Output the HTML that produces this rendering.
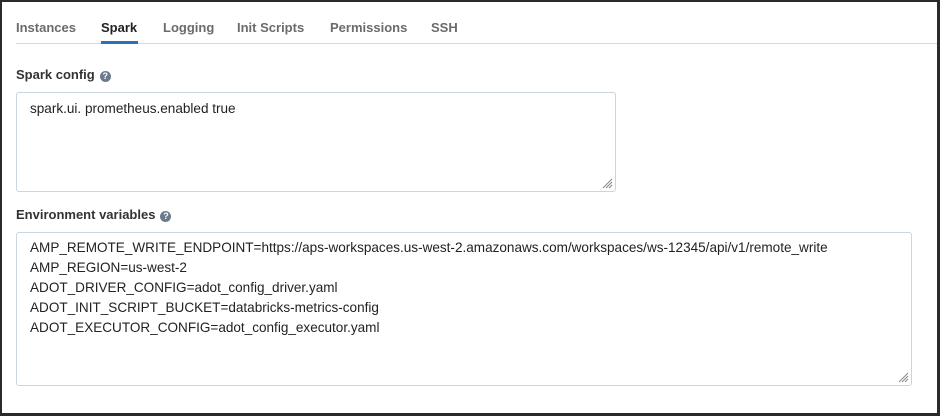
<!DOCTYPE html>
<html><head><style>
*{box-sizing:border-box;margin:0;padding:0}
body{width:940px;height:416px;background:#fff;font-family:"Liberation Sans",sans-serif;overflow:hidden}
.frame{position:absolute;left:0;top:0;width:940px;height:416px;border:2px solid #2a2a2a;border-right-width:3px;border-bottom-width:3px}
.tab{position:absolute;top:20px;font-size:13px;font-weight:bold;color:#6b6b6b}
.line{position:absolute;left:16px;top:43px;width:921px;height:1px;background:#d9d9d9}
.ul{position:absolute;left:101px;top:41px;width:37px;height:3px;background:#2a72b5}
.lbl{position:absolute;left:16px;font-size:13px;font-weight:bold;color:#333}
.q{display:inline-block;width:11px;height:11px;border-radius:50%;background:#6b7b8c;color:#fff;font-size:9px;line-height:11px;text-align:center;margin-left:5px;vertical-align:0px}
.ta{position:absolute;left:16px;border:1px solid #c9d6e2;border-radius:3px;font-size:13.55px;color:#222;padding:6px 0 0 13px;line-height:20px}
.grip{position:absolute;right:2px;bottom:2px}
</style></head><body>
<div class="frame"></div>
<div class="tab" style="left:16px">Instances</div>
<div class="tab" style="left:101px;color:#222">Spark</div>
<div class="tab" style="left:163px">Logging</div>
<div class="tab" style="left:237px">Init Scripts</div>
<div class="tab" style="left:330px">Permissions</div>
<div class="tab" style="left:431px">SSH</div>
<div class="line"></div><div class="ul"></div>
<div class="lbl" style="top:67px">Spark config<span class="q">?</span></div>
<div class="ta" style="top:92px;width:600px;height:100px">spark.ui. prometheus.enabled true
<svg class="grip" width="11" height="11"><path d="M10 1L1 10M10 4L4 10M10 7L7 10" stroke="#888" stroke-width="1"/></svg></div>
<div class="lbl" style="top:207px">Environment variables<span class="q">?</span></div>
<div class="ta" style="top:232px;width:896px;height:154px;padding-top:5px">AMP_REMOTE_WRITE_ENDPOINT=https://aps-workspaces.us-west-2.amazonaws.com/workspaces/ws-12345/api/v1/remote_write<br>AMP_REGION=us-west-2<br>ADOT_DRIVER_CONFIG=adot_config_driver.yaml<br>ADOT_INIT_SCRIPT_BUCKET=databricks-metrics-config<br>ADOT_EXECUTOR_CONFIG=adot_config_executor.yaml
<svg class="grip" width="11" height="11"><path d="M10 1L1 10M10 4L4 10M10 7L7 10" stroke="#888" stroke-width="1"/></svg></div>
</body></html>
